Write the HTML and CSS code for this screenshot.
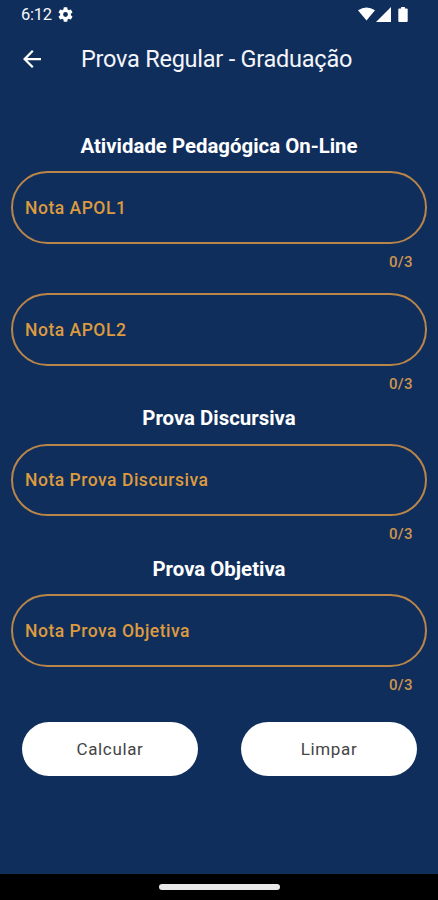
FILE: index.html
```html
<!DOCTYPE html>
<html lang="pt-BR">
<head>
<meta charset="utf-8">
<title>Prova Regular - Graduação</title>
<link rel="stylesheet" href="styles.css">
</head>
<body>
<div class="screen">
  <div class="status">
    <span class="time">6:12</span>
    <svg class="gear" viewBox="2 2 20 20"><path d="M19.14 12.94c.04-.3.06-.61.06-.94s-.02-.64-.07-.94l2.03-1.58a.49.49 0 0 0 .12-.61l-1.92-3.32a.49.49 0 0 0-.59-.22l-2.39.96a7 7 0 0 0-1.62-.94l-.36-2.54A.48.48 0 0 0 13.92 2.4h-3.84a.48.48 0 0 0-.47.41l-.36 2.54a7.4 7.4 0 0 0-1.62.94l-2.39-.96a.48.48 0 0 0-.59.22L2.74 8.87a.47.47 0 0 0 .12.61l2.03 1.58a6 6 0 0 0 0 1.88l-2.03 1.58a.49.49 0 0 0-.12.61l1.92 3.32c.12.22.37.29.59.22l2.39-.96c.5.38 1.03.7 1.62.94l.36 2.54c.05.24.24.41.48.41h3.84c.24 0 .44-.17.47-.41l.36-2.54a7 7 0 0 0 1.62-.94l2.39.96c.22.08.47 0 .59-.22l1.92-3.32a.47.47 0 0 0-.12-.61zM12 15.2a3.2 3.2 0 1 1 0-6.4 3.2 3.2 0 0 1 0 6.4z"/></svg>
    <div class="indicators">
      <svg class="wifi" viewBox="0 0 18 14"><path d="M0 3Q9-3 18 3L9 14z"/></svg>
      <svg class="signal" viewBox="0 0 15 15"><path d="M15 0V15H0z"/></svg>
      <svg class="battery" viewBox="0 0 10 16"><path d="M3 0H7V1.5H9Q10 1.5 10 2.5V15Q10 16 9 16H1Q0 16 0 15V2.5Q0 1.5 1 1.5H3z"/></svg>
    </div>
  </div>
  <header class="appbar">
    <svg class="back" viewBox="4 4 16 16"><path d="M20 11H7.83l5.59-5.59L12 4l-8 8 8 8 1.41-1.41L7.83 13H20z"/></svg>
    <h1 class="title">Prova Regular - Graduação</h1>
  </header>
  <main class="form">
    <h2 class="heading">Atividade Pedagógica On-Line</h2>
    <div class="field"><span class="label">Nota APOL1</span></div>
    <div class="counter">0/3</div>
    <div class="field spaced"><span class="label">Nota APOL2</span></div>
    <div class="counter">0/3</div>
    <h2 class="heading section">Prova Discursiva</h2>
    <div class="field"><span class="label">Nota Prova Discursiva</span></div>
    <div class="counter">0/3</div>
    <h2 class="heading section">Prova Objetiva</h2>
    <div class="field"><span class="label">Nota Prova Objetiva</span></div>
    <div class="counter">0/3</div>
    <div class="actions">
      <button class="button">Calcular</button>
      <button class="button">Limpar</button>
    </div>
  </main>
  <div class="navbar"><div class="handle"></div></div>
</div>
</body>
</html>
```
FILE: styles.css
```css
* { box-sizing: border-box; }
body { margin: 0; background: #102e5c; font-family: Roboto, "Liberation Sans", sans-serif; color: #f4f6fb; }
svg { display: block; fill: #fff; }
.screen { width: 438px; height: 900px; display: flex; flex-direction: column; }
.status { height: 29px; padding: 0 30px 0 21px; display: flex; align-items: center; }
.time { font-size: 16.5px; letter-spacing: -.3px; width: 31px; white-space: nowrap; }
.gear { width: 15px; height: 15px; margin-left: 6px; }
.indicators { display: flex; align-items: flex-end; margin-left: auto; }
.wifi { width: 17px; height: 14px; margin-bottom: 1px; }
.signal { width: 15px; height: 15px; margin-left: 1px; }
.battery { width: 10px; height: 15px; margin-left: 7px; }
.appbar { height: 59px; display: flex; align-items: center; padding-left: 23px; }
.back { width: 18px; height: 18px; }
.title { margin: 0 0 0 40px; font-size: 23.5px; font-weight: 400; letter-spacing: -.24px; white-space: nowrap; }
.form { flex: 1; padding: 45px 11px 0; }
.heading { margin: 0 0 12px; height: 26px; line-height: 26px; text-align: center; font-size: 20.4px; font-weight: 700; color: #fff; }
.section { height: 24.5px; line-height: 25px; margin-bottom: 13px; }
.field { height: 72.5px; border: 2px solid #b98549; border-radius: 37px; display: flex; align-items: center; padding: 1px 0 0 12px; }
.spaced { margin-top: 12px; }
.label { font-size: 17.5px; font-weight: 500; letter-spacing: .52px; color: #dc9b3f; }
.counter { height: 37.5px; line-height: 37px; margin-bottom: 3px; padding-right: 14px; text-align: right; font-size: 15px; font-weight: 500; letter-spacing: .4px; color: #ce954e; }
.actions { display: flex; justify-content: space-between; padding: 0 10px 0 11px; margin-top: 17.5px; }
.button { width: 176px; height: 54px; padding-top: 2px; border: 0; border-radius: 27px; background: #fff; color: #444; font: 400 17px Roboto, "Liberation Sans", sans-serif; letter-spacing: .65px; }
.navbar { height: 26px; background: #000; display: flex; justify-content: center; padding-top: 10px; }
.handle { width: 121px; height: 6px; border-radius: 3px; background: #e9e9e9; }
```
